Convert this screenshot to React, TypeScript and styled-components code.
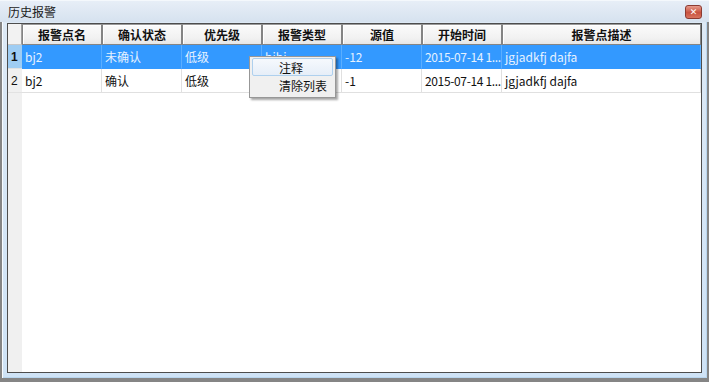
import React from 'react';
import styled, { createGlobalStyle } from 'styled-components';

const GlobalStyle = createGlobalStyle`
  html, body {
    margin: 0;
    padding: 0;
    background: #7d7d7d;
  }
  body {
    font-family: "Noto Sans CJK SC", "Liberation Sans", sans-serif;
    font-size: 12px;
  }
`;

const Window = styled.div`
  width: 709px;
  height: 382px;
  display: flex;
  flex-direction: column;
  background: #858585;
  overflow: hidden;
`;

const TitleBar = styled.div`
  height: 22px;
  flex: 0 0 22px;
  display: flex;
  align-items: center;
  justify-content: space-between;
  padding: 0 7px 0 8px;
  background: linear-gradient(#e7eef7, #d6e2ef);
  border-top: 1px solid #f4f8fc;
  box-sizing: border-box;
`;

const Title = styled.span`
  font-size: 12px;
  color: #1b1b1b;
  line-height: 1;
`;

const CloseButton = styled.div`
  width: 17px;
  height: 14px;
  margin-top: 1px;
  border-radius: 3px;
  border: 1px solid #8c3b32;
  box-sizing: border-box;
  background: linear-gradient(#e79b8c, #c8523f 55%, #d9745f);
  display: flex;
  align-items: center;
  justify-content: center;
  color: #fff;
  font-size: 9px;
  font-weight: bold;
  font-family: "DejaVu Sans", sans-serif;
  line-height: 1;
`;

const Body = styled.div`
  flex: 1;
  display: flex;
  padding: 0 2px 4px 2px;
`;

const Frame = styled.div`
  flex: 1;
  display: flex;
  padding: 1px 5px 5px 5px;
  background: linear-gradient(to bottom, #dde9f5, #cfe3f6);
  box-shadow: inset 1px 0 #f7fbff, inset -1px -1px #b9d6ef;
`;

const Inner = styled.div`
  flex: 1;
  position: relative;
  border: 1px solid #4d4d4d;
  background: linear-gradient(to right, #f0f0f0 14px, #ffffff 14px);
  overflow: hidden;
`;

const Table = styled.div`
  display: grid;
  grid-template-columns: 14px repeat(6, 80px) 1fr;
  grid-template-rows: 21px 24px 24px;
`;

const HeaderCell = styled.div`
  border: 1px solid #848484;
  border-top-color: #9a9a9a;
  box-shadow: inset 1px 1px #ffffff;
  background: linear-gradient(#fbfbfb, #f1f1f1 70%, #e6e6e6);
  display: flex;
  align-items: center;
  justify-content: center;
  font-weight: bold;
  color: #111;
  font-size: 12px;
  white-space: nowrap;
`;

const CornerCell = styled.div`
  background: #f2f2f2;
  border-right: 1px solid #a0a0a0;
  border-bottom: 1px solid #c8c8c8;
`;

const RowHead = styled.div<{ $selected?: boolean }>`
  background: ${({ $selected }) => ($selected ? '#9fcdf3' : '#f0f0f0')};
  border-bottom: 1px solid #e2e2e2;
  display: flex;
  align-items: center;
  padding-left: 3px;
  font-weight: ${({ $selected }) => ($selected ? 'bold' : 'normal')};
  color: #111;
  font-family: "Liberation Sans", sans-serif;
`;

const Cell = styled.div<{ $selected?: boolean; $tight?: boolean }>`
  background: ${({ $selected }) => ($selected ? '#3399ff' : '#ffffff')};
  color: ${({ $selected }) => ($selected ? '#e6f2ff' : '#111')};
  border-right: 1px solid ${({ $selected }) => ($selected ? '#5aaeff' : '#e0e0e0')};
  border-bottom: 1px solid ${({ $selected }) => ($selected ? '#3399ff' : '#e0e0e0')};
  display: flex;
  align-items: center;
  padding-left: 3px;
  white-space: nowrap;
  overflow: hidden;
  font-size: 12px;
  letter-spacing: ${({ $tight }) => ($tight ? '-0.35px' : 'normal')};
`;

const Menu = styled.div`
  position: absolute;
  left: 241px;
  top: 32px;
  width: 87px;
  height: 42px;
  box-sizing: border-box;
  border: 1px solid #979797;
  background: #f0f0f0;
  box-shadow: 2px 2px 2px rgba(0, 0, 0, 0.35);
  padding: 1px 2px;
  display: flex;
  flex-direction: column;
`;

const MenuItem = styled.div<{ $active?: boolean }>`
  height: 18px;
  flex: 0 0 18px;
  box-sizing: border-box;
  display: flex;
  align-items: center;
  padding-left: 26px;
  font-size: 12px;
  color: #111;
  border: 1px solid ${({ $active }) => ($active ? '#aed0ee' : 'transparent')};
  border-radius: 2px;
  background: ${({ $active }) =>
    $active ? 'linear-gradient(#f6f9fd, #e6eef8)' : 'transparent'};
`;

const headers = ['报警点名', '确认状态', '优先级', '报警类型', '源值', '开始时间', '报警点描述'];

const rows = [
  ['bj2', '未确认', '低级', 'bjbj', '-12', '2015-07-14 1...', 'jgjadkfj dajfa'],
  ['bj2', '确认', '低级', 'bjbj', '-1', '2015-07-14 1...', 'jgjadkfj dajfa'],
];

export default function App() {
  return (
    <>
      <GlobalStyle />
      <Window>
        <TitleBar>
          <Title>历史报警</Title>
          <CloseButton>✕</CloseButton>
        </TitleBar>
        <Body>
          <Frame>
            <Inner>
              <Table>
                <CornerCell />
                {headers.map((h) => (
                  <HeaderCell key={h}>{h}</HeaderCell>
                ))}
                {rows.map((r, i) => (
                  <React.Fragment key={i}>
                    <RowHead $selected={i === 0}>{i + 1}</RowHead>
                    {r.map((c, j) => (
                      <Cell key={j} $selected={i === 0} $tight={j === 5}>
                        {c}
                      </Cell>
                    ))}
                  </React.Fragment>
                ))}
              </Table>
              <Menu>
                <MenuItem $active>注释</MenuItem>
                <MenuItem>清除列表</MenuItem>
              </Menu>
            </Inner>
          </Frame>
        </Body>
      </Window>
    </>
  );
}
